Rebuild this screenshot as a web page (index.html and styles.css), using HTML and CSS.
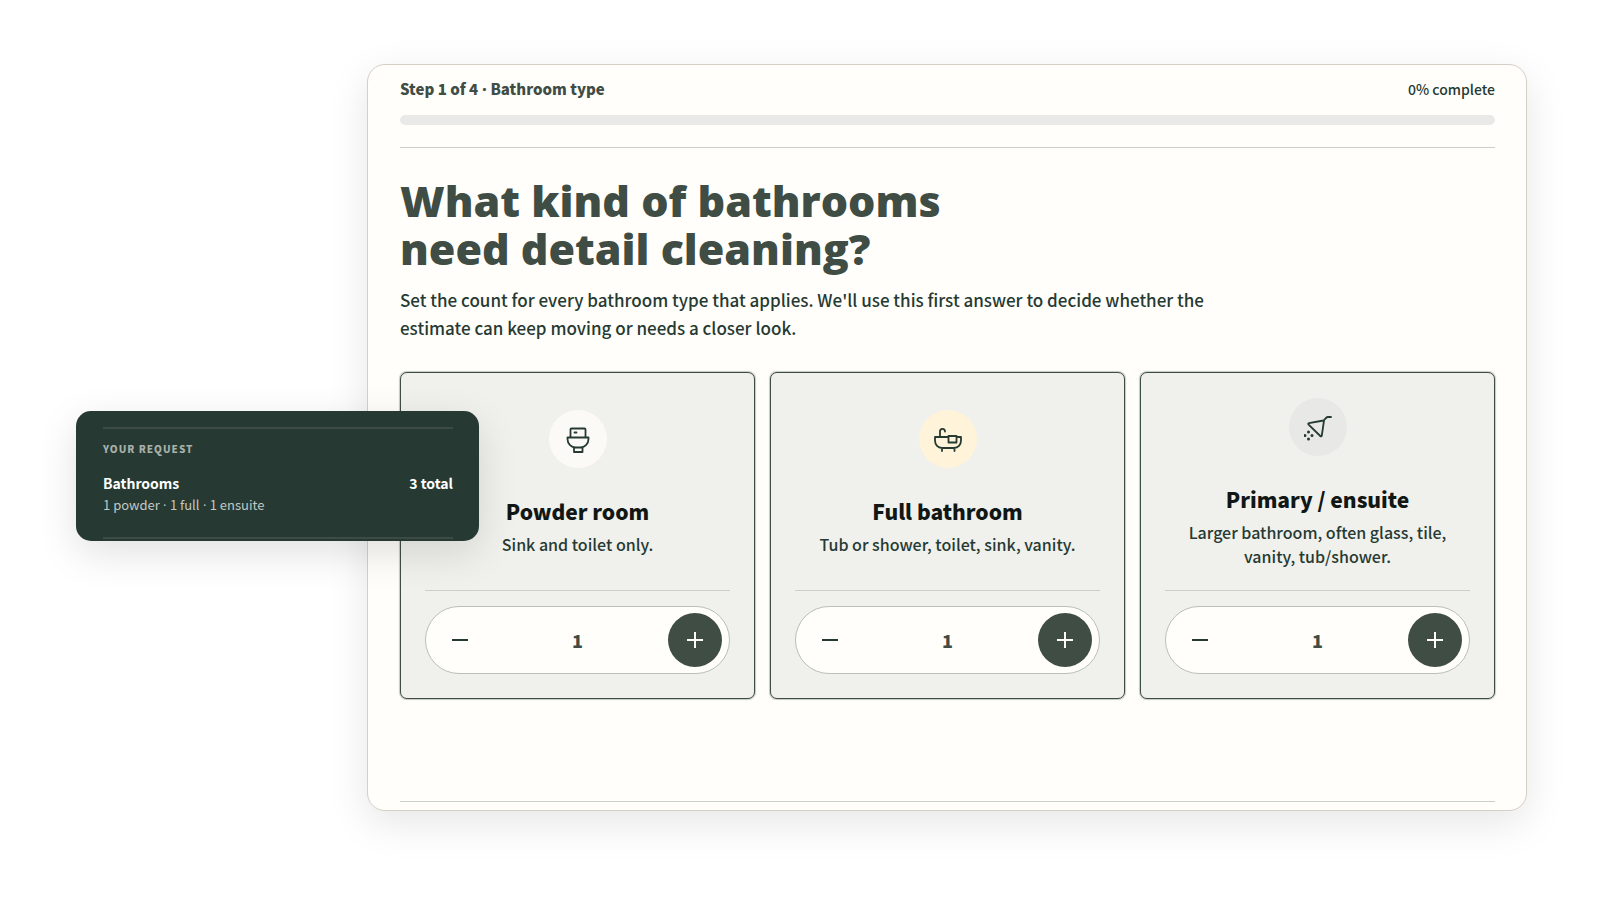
FILE: index.html
```
<!DOCTYPE html>
<html lang="en">
<head>
    <meta charset="UTF-8">
    <meta name="viewport" content="width=device-width, initial-scale=1.0">
    <title>Bathroom cleaning estimate</title>
    <link rel="stylesheet" href="styles.css">
</head>
<body>
    <main class="stage">
        <section class="panel">
            <!-- Progress -->
            <header class="progress">
                <div class="progress-labels">
                    <strong id="step-label">Step 1 of 4<span class="dot"> · </span>Bathroom type</strong>
                    <span class="percent">0% complete</span>
                </div>
                <div class="progress-track" role="progressbar" aria-labelledby="step-label" aria-valuenow="0" aria-valuemin="0" aria-valuemax="100"></div>
            </header>

            <h1>What kind of bathrooms<br>need detail cleaning?</h1>
            <p class="intro">Set the count for every bathroom type that applies. We'll use this first answer to decide whether the estimate can keep moving or needs a closer look.</p>

            <!-- Bathroom types -->
            <div class="cards">
                <article class="card">
                    <div class="card-body">
                        <span class="icon icon-white">
                            <svg viewBox="0 0 28 28" aria-hidden="true">
                                <path d="M6.500 12V4.500a1 1 0 0 1 1-1h13a1 1 0 0 1 1 1V12M3.500 12.500h21v1.500c0 5-4 8.500-8 8.500h-5c-4 0-8-3.500-8-8.500zM10 22.500v4.500h8.500v-4.500M10.500 7.500h2"/>
                            </svg>
                        </span>
                        <h2>Powder room</h2>
                        <p>Sink and toilet only.</p>
                    </div>
                    <div class="stepper">
                        <button type="button" class="minus" aria-label="Remove powder room"><svg viewBox="0 0 16 16"><path d="M0 8h16"/></svg></button>
                        <output>1</output>
                        <button type="button" class="plus" aria-label="Add powder room"><svg viewBox="0 0 16 16"><path d="M0 8h16M8 0v16"/></svg></button>
                    </div>
                </article>

                <article class="card">
                    <div class="card-body">
                        <span class="icon icon-cream">
                            <svg viewBox="0 0 28 28" aria-hidden="true">
                                <path d="M14.500 12H1v3.500C1 20 4 23 8 23h12c4 0 7-3 7-7.500V12h-4.500M14.500 11h8v6.500h-8zM6 12V6.500c0-3.500 5-3.500 5 0M8 23v3M20.500 23v3"/>
                            </svg>
                        </span>
                        <h2>Full bathroom</h2>
                        <p>Tub or shower, toilet, sink, vanity.</p>
                    </div>
                    <div class="stepper">
                        <button type="button" class="minus" aria-label="Remove full bathroom"><svg viewBox="0 0 16 16"><path d="M0 8h16"/></svg></button>
                        <output>1</output>
                        <button type="button" class="plus" aria-label="Add full bathroom"><svg viewBox="0 0 16 16"><path d="M0 8h16M8 0v16"/></svg></button>
                    </div>
                </article>

                <article class="card">
                    <div class="card-body">
                        <span class="icon icon-grey">
                            <svg viewBox="0 0 28 28" aria-hidden="true">
                                <path d="M27 4h-3.500c-1 0-3 3-4 3.500L5 10.200c-1 .2-1 .8-.4 1.400L16.300 23c.7.7 1.300.4 1.500-.5l2.200-15"/>
                                <path class="drops" d="M4.500 19v.1M1 22.500v.1M8 22.500v.1M4.500 26v.1"/>
                            </svg>
                        </span>
                        <h2>Primary / ensuite</h2>
                        <p>Larger bathroom, often glass, tile, vanity, tub/shower.</p>
                    </div>
                    <div class="stepper">
                        <button type="button" class="minus" aria-label="Remove primary bathroom"><svg viewBox="0 0 16 16"><path d="M0 8h16"/></svg></button>
                        <output>1</output>
                        <button type="button" class="plus" aria-label="Add primary bathroom"><svg viewBox="0 0 16 16"><path d="M0 8h16M8 0v16"/></svg></button>
                    </div>
                </article>
            </div>

            <footer class="panel-footer"></footer>
        </section>

        <!-- Floating summary -->
        <aside class="summary">
            <div class="summary-inner">
                <h3>Your request</h3>
                <div class="summary-row">
                    <strong>Bathrooms</strong>
                    <strong>3 total</strong>
                </div>
                <p>1 powder<span class="dot"> · </span>1 full<span class="dot"> · </span>1 ensuite</p>
            </div>
        </aside>
    </main>

    <script>
        document.querySelectorAll('.stepper').forEach((stepper) => {
            const count = stepper.querySelector('output');
            stepper.querySelector('.minus').addEventListener('click', () => {
                count.textContent = Math.max(0, Number(count.textContent) - 1);
            });
            stepper.querySelector('.plus').addEventListener('click', () => {
                count.textContent = Number(count.textContent) + 1;
            });
        });
    </script>
</body>
</html>
```
FILE: styles.css
```
* {
    box-sizing: border-box;
}

body {
    margin: 0;
    background: #fff;
    color: #263a33;
    font-family: "Noto Sans CJK SC", sans-serif;
    font-weight: 500;
}

h1, h2, h3, p {
    margin: 0;
}

/* The CJK middle dot is full width, take a narrow one */
.dot {
    font-family: "Open Sans", sans-serif;
    line-height: 1;
}

.stage {
    position: relative;
    padding: 64px 73px 64px 367px;
}

/* Main panel */
.panel {
    padding: 12px 31px 8px 32px;
    background: #fffefa;
    border: 1px solid #d5cfc5;
    border-radius: 18px;
    box-shadow: 0 12px 40px rgba(0, 0, 0, 0.1);
}

.progress {
    padding-bottom: 22px;
    border-bottom: 1px solid #cbcfca;
}

.progress-labels {
    display: flex;
    justify-content: space-between;
    font-size: 15px;
    line-height: 24px;
}

.progress-labels strong {
    color: #3f4d45;
    font-weight: 900;
}

.percent {
    font-size: 14px;
}

.progress-track {
    height: 10px;
    margin-top: 14px;
    background: #e9e9e7;
    border-radius: 5px;
}

h1 {
    margin-top: 29px;
    color: #3f4d45;
    font-family: "Open Sans", sans-serif;
    font-size: 43px;
    font-weight: 800;
    line-height: 48px;
}

.intro {
    max-width: 840px;
    margin-top: 13px;
    font-size: 17px;
    line-height: 28px;
}

/* Bathroom cards */
.cards {
    display: grid;
    grid-template-columns: repeat(3, 1fr);
    gap: 15px;
    margin-top: 30px;
}

.card {
    display: flex;
    flex-direction: column;
    padding: 25px 24px 24px;
    background: #f0f0ec;
    border: 1px solid #3f4d45;
    border-radius: 7px;
    box-shadow: 0 0 1px 1px rgba(63, 77, 69, 0.3);
}

.card-body {
    display: flex;
    flex: 1;
    flex-direction: column;
    align-items: center;
    justify-content: center;
    padding-bottom: 22px;
    border-bottom: 1px solid #cbcfca;
    text-align: center;
}

.icon {
    display: flex;
    align-items: center;
    justify-content: center;
    width: 58px;
    height: 58px;
    border-radius: 50%;
}

.icon-white {
    background: #fbfaf7;
}

.icon-cream {
    background: #fff3da;
}

.icon-grey {
    background: #e8e8e6;
}

.icon svg {
    width: 28px;
    height: 28px;
    fill: none;
    stroke: #263a33;
    stroke-width: 1.8;
    stroke-linecap: round;
    stroke-linejoin: round;
}

.icon .drops {
    stroke-width: 3;
}

.card h2 {
    margin-top: 27px;
    color: #101715;
    font-size: 21px;
    font-weight: 900;
    line-height: 32px;
}

.card p {
    max-width: 270px;
    margin-top: 5px;
    font-size: 16px;
    line-height: 24px;
}

.stepper {
    display: flex;
    align-items: center;
    justify-content: space-between;
    height: 68px;
    margin-top: 15px;
    padding: 0 7px;
    background: #fffefa;
    border: 1px solid #b9bfb9;
    border-radius: 34px;
}

.stepper output {
    color: #3f4d45;
    font-size: 18px;
    font-weight: 900;
}

.stepper button {
    display: flex;
    align-items: center;
    justify-content: center;
    width: 54px;
    height: 54px;
    padding: 0;
    background: none;
    border: none;
    border-radius: 50%;
    color: #263a33;
    cursor: pointer;
}

.stepper .plus {
    background: #3f4d45;
    color: #fffefa;
}

.stepper svg {
    width: 16px;
    height: 16px;
    fill: none;
    stroke: currentColor;
    stroke-width: 2;
}

.panel-footer {
    margin-top: 102px;
    border-top: 1px solid #cbcfca;
}

/* Summary, lies over the left edge of the panel */
.summary {
    position: absolute;
    top: 411px;
    left: 76px;
    width: 403px;
    padding: 16px 26px 2px 27px;
    background: #263a33;
    border-radius: 15px;
    box-shadow: 0 12px 40px rgba(0, 0, 0, 0.12);
    color: #fff;
}

.summary-inner {
    padding: 10px 0 22px;
    border-top: 2px solid #3c4b43;
    border-bottom: 2px solid #3c4b43;
}

.summary h3 {
    color: #a8b0a9;
    font-size: 10px;
    font-weight: 900;
    letter-spacing: 1px;
    line-height: 20px;
    text-transform: uppercase;
}

.summary-row {
    display: flex;
    justify-content: space-between;
    margin-top: 12px;
    font-size: 14px;
    line-height: 24px;
}

.summary p {
    color: #c3c8c3;
    font-size: 13px;
    font-weight: 400;
    line-height: 20px;
}
```
